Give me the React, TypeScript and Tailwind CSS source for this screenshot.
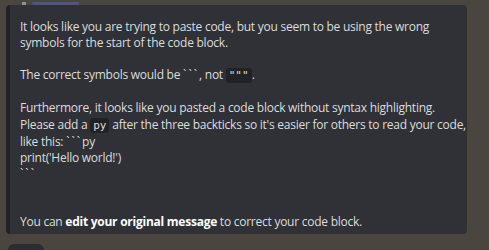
export default function App() {
  const code = "rounded-[3px] bg-[#202225] px-[3px] py-[1px] text-[11px] tracking-normal font-['DejaVu_Sans_Mono',monospace]";
  const ticks = "tracking-[2px]";
  return (
    <div className="w-[489px] h-[250px] overflow-hidden bg-[#4a463f] font-['Open_Sans',sans-serif] text-[12px] text-[#dcddde]">
      <div className="h-[5px] overflow-hidden flex items-end pl-[22px] gap-[6px]">
        <span className="h-[3px] w-[4px] bg-[#8e9297]" />
        <span className="h-[3px] w-[47px] rounded-b-[2px] bg-[#4f5486]" />
      </div>
      <div className="ml-[6px] w-[461px] h-[229px] overflow-hidden rounded-[4px] border-l-4 border-[#202225] bg-[#2f3136] pl-[10px] pr-[8px] pt-[14px] leading-[16.1px] tracking-[-0.25px] whitespace-nowrap">
        <p>
          It looks like you are trying to paste code, but you seem to be using the wrong
          <br />
          symbols for the start of the code block.
        </p>
        <p className="mt-[16.1px]">
          The correct symbols would be <span className={ticks}>```</span>, not <span className={code}>"""</span>.
        </p>
        <p className="mt-[16.1px]">
          Furthermore, it looks like you pasted a code block without syntax highlighting.
          <br />
          Please add a <span className={code}>py</span> after the three backticks so it's easier for others to read your code,
          <br />
          like this: <span className={ticks}>```</span>py
          <br />
          print('Hello world!')
          <br />
          <span className={ticks}>```</span>
        </p>
        <p className="mt-[32.2px]">
          You can <span className="font-bold text-white">edit your original message</span> to correct your code block.
        </p>
      </div>
      <div className="mt-[10px] ml-[8px] h-[12px] w-[36px] rounded-[6px] bg-[#2b2d31]" />
    </div>
  );
}
